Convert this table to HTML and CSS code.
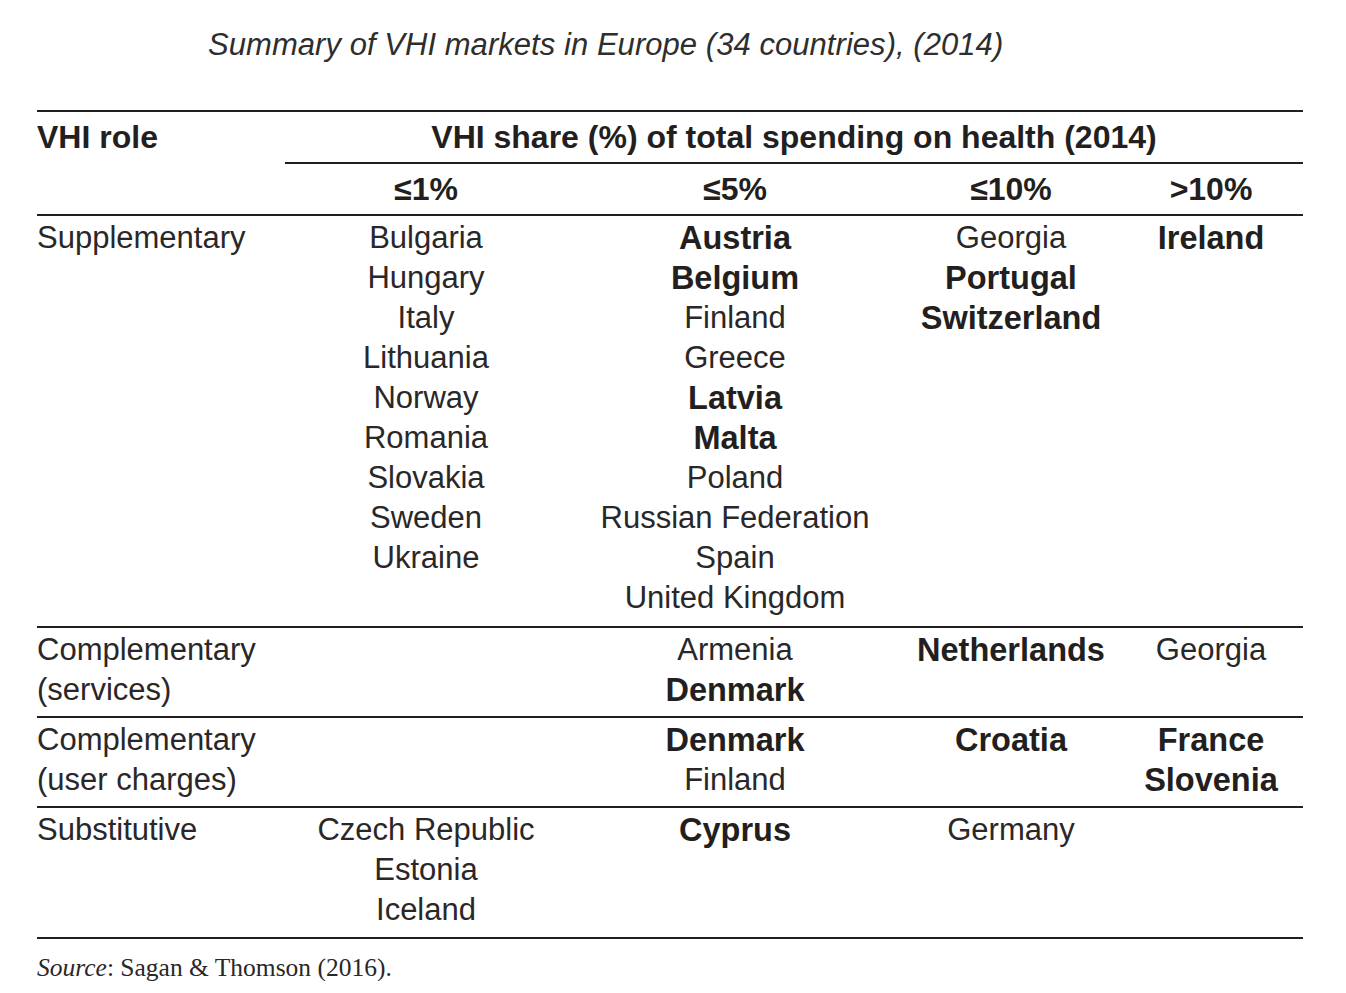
FILE: index.html
```html
<!DOCTYPE html>
<html lang="en">
<head>
<meta charset="utf-8">
<title>Summary of VHI markets in Europe</title>
<link rel="stylesheet" href="styles.css">
</head>
<body>
<div class="page">
  <h1 class="title">Summary of VHI markets in Europe (34 countries), (2014)</h1>
  <div class="table">
    <div class="head">
      <div class="h-role">VHI role</div>
      <div class="h-share">VHI share (%) of total spending on health (2014)</div>
      <div class="h-col">≤1%</div>
      <div class="h-col">≤5%</div>
      <div class="h-col">≤10%</div>
      <div class="h-col">&gt;10%</div>
    </div>

    <div class="row r-first">
      <div class="role"><div>Supplementary</div></div>
      <div class="cell">
        <div>Bulgaria</div><div>Hungary</div><div>Italy</div><div>Lithuania</div><div>Norway</div><div>Romania</div><div>Slovakia</div><div>Sweden</div><div>Ukraine</div>
      </div>
      <div class="cell">
        <div class="b">Austria</div><div class="b">Belgium</div><div>Finland</div><div>Greece</div><div class="b">Latvia</div><div class="b">Malta</div><div>Poland</div><div>Russian Federation</div><div>Spain</div><div>United Kingdom</div>
      </div>
      <div class="cell">
        <div>Georgia</div><div class="b">Portugal</div><div class="b">Switzerland</div>
      </div>
      <div class="cell">
        <div class="b">Ireland</div>
      </div>
    </div>

    <div class="row">
      <div class="role"><div>Complementary</div><div>(services)</div></div>
      <div class="cell"></div>
      <div class="cell"><div>Armenia</div><div class="b">Denmark</div></div>
      <div class="cell"><div class="b">Netherlands</div></div>
      <div class="cell"><div>Georgia</div></div>
    </div>

    <div class="row">
      <div class="role"><div>Complementary</div><div>(user charges)</div></div>
      <div class="cell"></div>
      <div class="cell"><div class="b">Denmark</div><div>Finland</div></div>
      <div class="cell"><div class="b">Croatia</div></div>
      <div class="cell"><div class="b">France</div><div class="b">Slovenia</div></div>
    </div>

    <div class="row r-last">
      <div class="role"><div>Substitutive</div></div>
      <div class="cell"><div>Czech Republic</div><div>Estonia</div><div>Iceland</div></div>
      <div class="cell"><div class="b">Cyprus</div></div>
      <div class="cell"><div>Germany</div></div>
      <div class="cell"></div>
    </div>
  </div>
  <p class="source"><em>Source</em>: Sagan &amp; Thomson (2016).</p>
</div>
</body>
</html>
```

FILE: styles.css
```css
html, body {
  margin: 0;
  padding: 0;
  background: #ffffff;
}

.page {
  padding: 28px 0 0 37px;
  width: 1266px;
  color: #231f20;
  font-family: "Liberation Sans", Arial, sans-serif;
}

.title {
  margin: 0;
  padding-left: 171px;
  font-size: 31px;
  line-height: 34px;
  font-weight: normal;
  font-style: italic;
  color: #2e2e2e;
  height: 82px;
  letter-spacing: 0.05px;
}

.table {
  font-size: 31px;
  color: #2a2728;
}

.head {
  display: grid;
  grid-template-columns: 248px 282px 336px 216px 184px;
  grid-template-rows: 52px 50px;
  border-top: 2px solid #231f20;
  border-bottom: 2px solid #231f20;
  font-weight: bold;
  font-size: 32px;
  color: #231f20;
}

.h-role {
  grid-column: 1;
  grid-row: 1;
  line-height: 50px;
}

.h-share {
  grid-column: 2 / 6;
  grid-row: 1;
  text-align: center;
  line-height: 50px;
  border-bottom: 2px solid #231f20;
}

.h-col {
  grid-row: 2;
  text-align: center;
  line-height: 50px;
}

.h-col:nth-child(3) { grid-column: 2; }
.h-col:nth-child(4) { grid-column: 3; }
.h-col:nth-child(5) { grid-column: 4; }
.h-col:nth-child(6) { grid-column: 5; }

.row {
  display: grid;
  grid-template-columns: 248px 282px 336px 216px 184px;
  padding: 2px 0 6px;
  border-bottom: 2px solid #231f20;
  line-height: 40px;
}

.r-first {
  padding-bottom: 8px;
}

.r-last {
  padding-bottom: 7px;
}

.role {
  text-align: left;
}

.cell {
  text-align: center;
}

.b {
  font-weight: bold;
  font-size: 32.5px;
  color: #231f20;
}

.source {
  margin: 16px 0 0;
  font-family: "Liberation Serif", "Times New Roman", serif;
  font-size: 25.5px;
  line-height: 26px;
  color: #2a2728;
}
```
